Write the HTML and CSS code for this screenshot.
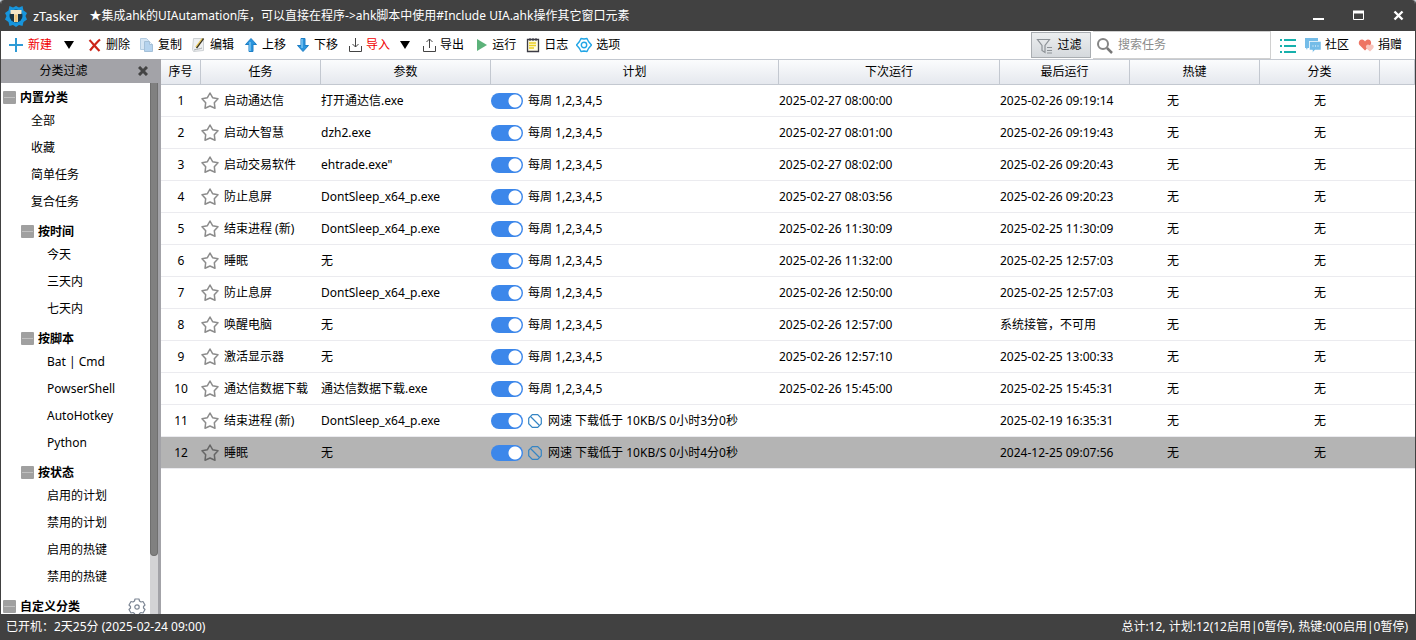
FILE: index.html
```
<!DOCTYPE html>
<html lang="zh-CN">
    <head>
        <meta charset="utf-8">
        <title>zTasker</title>
        <meta name="viewport" content="width=device-width, initial-scale=1">
        <link rel="stylesheet" href="styles.css">
    </head>
    <body>
        <svg class="defs" aria-hidden="true">
            <symbol id="star" viewBox="0 0 18 18">
                <path d="M9 1 L11.6 5.700 L17 6.700 L13.300 10.700 L14 16.300 L9 14 L4 16.300 L4.700 10.700 L1 6.700 L6.400 5.700 Z" fill="none" stroke="currentColor" stroke-width="1.5" stroke-linejoin="round"/>
            </symbol>
            <symbol id="ban" viewBox="0 0 14 14">
                <path d="M4.3 .7h5.4l3.6 3.6v5.4l-3.6 3.6H4.3L.7 9.7V4.3z M3 3l8 8" fill="none" stroke="#3585c4" stroke-width="1.2"/>
            </symbol>
        </svg>
        <div id="window">
            <header id="titlebar">
                <svg class="logo" viewBox="0 0 22 22">
                    <path d="M4.500 1L8 2.500 11 1l3 1.500L17.500 1l1 4.500L22 8l-1.500 3L22 14.500 18.500 17l-1 4-3.500-1-3 2-3-2-3.500 1-1-4L0 14.500 1.500 11 0 8l3.500-2.500z" fill="#1795dc"/>
                    <circle cx="11" cy="11" r="6.500" fill="#1b3443"/>
                    <path d="M5.500 5h11v4H13v8H9V9H5.500z" fill="#f5e6c8"/>
                    <path d="M9.500 9.500h3V17h-3z" fill="#efc478"/>
                </svg>
                <h1>zTasker</h1>
                <p>★集成ahk的UIAutamation库，可以直接在程序-&gt;ahk脚本中使用#Include UIA.ahk操作其它窗口元素</p>
                <div class="winbuttons">
                    <button type="button" aria-label="最小化"><svg viewBox="0 0 12 12"><path d="M0 9h11" stroke="#fff" stroke-width="2"/></svg></button>
                    <button type="button" aria-label="最大化"><svg viewBox="0 0 12 12"><path d="M.5 1v8.5h10V1" fill="none" stroke="#fff"/><path d="M0 2h11" stroke="#fff" stroke-width="3"/></svg></button>
                    <button type="button" aria-label="关闭"><svg viewBox="0 0 12 12"><path d="M1.5 1.5l8 8M9.500 1.5l-8 8" stroke="#fff" stroke-width="2.4"/></svg></button>
                </div>
            </header>

            <nav id="toolbar">
                <button type="button" class="tool red">
                    <svg viewBox="0 0 16 16"><path d="M8 1v14M1 8h14" stroke="#2d9bd6" stroke-width="2"/></svg>新建
                </button>
                <button type="button" class="caret caret-new" aria-label="新建菜单"><svg viewBox="0 0 10 8"><path d="M0 0h10L5 8z"/></svg></button>
                <button type="button" class="tool">
                    <svg viewBox="0 0 16 16"><path d="M3.5 3c3 3 6 7 10 11M14 2.5C10 6 7 10 4 13.5" fill="none" stroke="#cc2418" stroke-width="2.2"/></svg>删除
                </button>
                <button type="button" class="tool">
                    <svg viewBox="0 0 16 16"><path d="M2.5 1.5h6l2 2v9h-8z" fill="#d6e6f4" stroke="#b4cde2"/><path d="M6.5 4.5h5l3 3v7h-8z" fill="#b5d3ee" stroke="#a4c0d8"/><path d="M11.5 4.5v3h3" fill="#eef6fc" stroke="#a4c0d8"/></svg>复制
                </button>
                <button type="button" class="tool">
                    <svg viewBox="0 0 16 16"><path d="M3.5 1.5h10v12l-10 1-1-2z" fill="#eef0f1" stroke="#cdd1d4"/><path d="M4 13c3-1 6-1 8-2" fill="none" stroke="#a7adb2"/><path d="M13.5 1.500l-7 9.500" stroke="#3a3524" stroke-width="1.6"/><path d="M12.300 1.500l-6.500 8.500" stroke="#e8c34a" stroke-width="1.200"/></svg>编辑
                </button>
                <button type="button" class="tool">
                    <svg viewBox="0 0 16 16"><path d="M9 1.5l5.500 6H11v7H7v-7H3.500z" fill="#2a94dc" stroke="#1f7fc6" stroke-linejoin="round"/><path d="M8 5v9" stroke="#7cc6f3" stroke-width="1.5"/></svg>上移
                </button>
                <button type="button" class="tool">
                    <svg viewBox="0 0 16 16"><path d="M9 14.5l5.500-6H11v-7H7v7H3.500z" fill="#2a94dc" stroke="#1f7fc6" stroke-linejoin="round"/><path d="M8 2v9" stroke="#7cc6f3" stroke-width="1.5"/></svg>下移
                </button>
                <button type="button" class="tool red">
                    <svg viewBox="0 0 16 16"><path d="M3.5 9v5.500h12V9M9.5 1v9M6.500 7l3 3 3-3" fill="none" stroke="#444"/></svg>导入
                </button>
                <button type="button" class="caret" aria-label="导入菜单"><svg viewBox="0 0 10 8"><path d="M0 0h10L5 8z"/></svg></button>
                <button type="button" class="tool">
                    <svg viewBox="0 0 16 16"><path d="M3.5 9v5.500h12V9M9.5 11V2M6.500 5l3-3 3 3" fill="none" stroke="#444"/></svg>导出
                </button>
                <button type="button" class="tool">
                    <svg viewBox="0 0 16 16"><path d="M5 2l10 6-10 6z" fill="#5cb27a"/></svg>运行
                </button>
                <button type="button" class="tool">
                    <svg viewBox="0 0 16 16"><path d="M3.5 2.5h11v12h-11z" fill="#fffbe4" stroke="#3c3c46" stroke-width="1.3"/><path d="M6 1v3M9 1v3M12 1v3" stroke="#3c3c46"/><path d="M5 6h7M5 8.500h7M5 11h5" stroke="#ecd022" stroke-width="1.4"/></svg>日志
                </button>
                <button type="button" class="tool">
                    <svg viewBox="0 0 16 16"><path d="M5 1.5L8 2l3-.5 1.500 3 3 3.500-3 3.500-1.500 3L8 14l-3 .5-1.500-3L.5 8l3-3.500z" fill="none" stroke="#21a5e6" stroke-width="1.4" stroke-linejoin="round"/><circle cx="8" cy="8" r="2.700" fill="none" stroke="#21a5e6" stroke-width="1.4"/></svg>选项
                </button>

                <div class="right">
                    <button type="button" class="filter">
                        <svg viewBox="0 0 18 18"><path d="M1.5 3.500h12l-4.500 6v7l-3-2v-5z" fill="none" stroke="#8d9297" stroke-width="1.200"/><path d="M11 11.500h5M11 14.500h5M11 17h5" stroke="#8d9297"/></svg>过滤
                    </button>
                    <label class="search">
                        <svg viewBox="0 0 18 18"><circle cx="7" cy="8" r="5" fill="none" stroke="#858585" stroke-width="2"/><path d="M11 12l5 5" stroke="#777" stroke-width="2.5"/></svg>
                        <input type="text" placeholder="搜索任务" aria-label="搜索任务">
                    </label>
                    <button type="button" class="tool listview" aria-label="列表">
                        <svg viewBox="0 0 16 16"><path d="M0 3h2M4 3h12M0 9h2M4 9h12M0 15h2M4 15h12" stroke="#16b0ac" stroke-width="2"/></svg>
                    </button>
                    <a href="#" class="tool">
                        <svg viewBox="0 0 16 16"><path d="M0 1h13v3H4v7H2.500L2 13l-1-2H0z" fill="#74bce8"/><path d="M4.500 4.500H16V13h-6l-2.500 2.500V13h-3z" fill="#74bce8" stroke="#fff" stroke-width=".5"/><path d="M7.500 9h1M10 9h1M12.500 9h1" stroke="#fff"/></svg>社区
                    </a>
                    <a href="#" class="tool">
                        <svg viewBox="0 0 16 16"><path d="M7 13.500L1.500 8C0 6 1 2.500 4 2.500c1.500 0 2.500 1 3 2 .5-1 1.500-2 3-2 3 0 4 3.500 2.500 5.500z" fill="#ee7463"/><path d="M12 14.500L8.500 11.500c-1.500-2 0-4 1.500-4 1 0 1.500 1 1.500 1s.5-1 2-1c2 0 3 2 1.500 4z" fill="#f8c5bd"/></svg>捐赠
                    </a>
                </div>
            </nav>

            <main>
                <aside id="sidebar">
                    <div class="sidehead">
                        <h2>分类过滤</h2>
                        <button type="button" aria-label="关闭"><svg viewBox="0 0 10 10"><path d="M1 1l8 8M9 1L1 9" stroke="#444" stroke-width="3"/></svg></button>
                    </div>
                    <div class="sidebody">
                        <div class="tree">
                            <h3><i></i>内置分类</h3>
                            <ul>
                                <li>全部</li>
                                <li>收藏</li>
                                <li>简单任务</li>
                                <li>复合任务</li>
                            </ul>
                            <div class="sub">
                                <h3><i></i>按时间</h3>
                                <ul>
                                    <li>今天</li>
                                    <li>三天内</li>
                                    <li>七天内</li>
                                </ul>
                                <h3><i></i>按脚本</h3>
                                <ul>
                                    <li>Bat | Cmd</li>
                                    <li>PowserShell</li>
                                    <li>AutoHotkey</li>
                                    <li>Python</li>
                                </ul>
                                <h3><i></i>按状态</h3>
                                <ul>
                                    <li>启用的计划</li>
                                    <li>禁用的计划</li>
                                    <li>启用的热键</li>
                                    <li>禁用的热键</li>
                                </ul>
                            </div>
                            <h3><i></i>自定义分类
                                <button type="button" class="gear" aria-label="设置"><svg viewBox="0 0 18 18"><path d="M7 1h4l.5 2 1.500 1 2-.5 2 3.500-1.500 1.500v1.500L17 11.500 15 15l-2-.5-1.500 1L11 17H7l-.5-1.500-1.500-1-2 .5-2-3.500L2.500 10V8.500L1 7l2-3.500L5 4l1.500-1z" fill="none" stroke="#7d8694" stroke-width="1.200" stroke-linejoin="round"/><circle cx="9" cy="9" r="2.200" fill="none" stroke="#7d8694" stroke-width="1.200"/></svg></button>
                            </h3>
                        </div>
                        <div class="track"><div class="thumb"></div></div>
                    </div>
                </aside>

                <div id="list">
                    <table>
                        <thead>
                            <tr>
                                <th class="c-no">序号</th>
                                <th class="c-task">任务</th>
                                <th class="c-arg">参数</th>
                                <th>计划</th>
                                <th class="c-next">下次运行</th>
                                <th class="c-last">最后运行</th>
                                <th class="c-key">热键</th>
                                <th class="c-cat">分类</th>
                                <th class="c-end"></th>
                            </tr>
                        </thead>
                        <tbody id="tasks"></tbody>
                    </table>
                </div>
            </main>

            <footer id="status">
                <span>已开机：2天25分 (2025-02-24 09:00)</span>
                <span>总计:12, 计划:12(12启用|0暂停), 热键:0(0启用|0暂停)</span>
            </footer>
        </div>
        <script src="script.js"></script>
    </body>
</html>
```
FILE: styles.css
```
*{
    box-sizing: border-box;
}
body{
    margin: 0;
    background-color: #c9d3da;
    color: #000;
    font: 12px/16px "Noto Sans", "Noto Sans CJK SC", sans-serif;
}
h1, h2, h3, p, ul{
    margin: 0;
    padding: 0;
    font-size: 12px;
    font-weight: normal;
}
button, input{
    font: inherit;
    color: inherit;
    border: 0;
    padding: 0;
    background: none;
}
a{
    color: inherit;
    text-decoration: none;
}
svg{
    display: block;
    flex: none;
}
.defs{
    display: none;
}
#window{
    display: flex;
    flex-direction: column;
    height: 100vh;
    background-color: #fff;
    border: solid #414141;
    border-width: 0 1px;
    border-radius: 4px 4px 0 0;
    overflow: hidden;
}

/* title bar */
#titlebar{
    display: flex;
    align-items: center;
    height: 31px;
    flex: none;
    padding: 1px 10px 0 4px;
    background-color: #414141;
    color: #fff;
}
.logo{
    width: 22px;
    height: 22px;
    margin-right: 6px;
}
#titlebar h1{
    font-size: 13px;
    margin-right: 11px;
}
#titlebar p{
    white-space: nowrap;
}
.winbuttons{
    display: flex;
    gap: 28px;
    margin-left: auto;
}
.winbuttons svg{
    width: 12px;
    height: 12px;
}

/* toolbar */
#toolbar{
    display: flex;
    align-items: center;
    gap: 8px;
    height: 28px;
    flex: none;
    padding: 0 13px 0 7px;
    white-space: nowrap;
}
.tool{
    display: flex;
    align-items: center;
    gap: 4px;
}
.tool svg{
    width: 16px;
    height: 16px;
}
.red{
    color: #f00000;
}
.caret{
    display: flex;
    justify-content: center;
    width: 14px;
}
.caret-new{
    width: 18px;
}
.caret svg{
    width: 10px;
    height: 8px;
}
.right{
    display: flex;
    align-items: center;
    gap: 9px;
    margin-left: auto;
}
.filter{
    display: flex;
    align-items: center;
    justify-content: center;
    gap: 3px;
    width: 60px;
    height: 26px;
    padding-right: 4px;
    background: linear-gradient(#eceeef, #d5d9dd);
    border: 1px solid #a9adb1;
}
.filter svg{
    width: 18px;
    height: 18px;
}
.search{
    display: flex;
    align-items: center;
    gap: 4px;
    width: 178px;
    height: 28px;
    margin-left: -7px;
    padding-left: 3px;
    border: 1px solid #d0d0d0;
    border-left: 0;
}
.search svg{
    width: 18px;
    height: 18px;
}
.search input{
    flex: 1;
    min-width: 0;
    outline: none;
}
.search input::placeholder{
    color: #8c8c8c;
}

/* sidebar */
main{
    display: flex;
    flex: 1;
    min-height: 0;
}
#sidebar{
    display: flex;
    flex-direction: column;
    width: 160px;
    flex: none;
    border-right: 3px solid #a3a3a8;
}
.sidehead{
    display: flex;
    align-items: center;
    height: 24px;
    flex: none;
    padding-right: 10px;
    background-color: #a3a3a8;
}
.sidehead h2{
    flex: 1;
    padding-right: 12px;
    text-align: center;
}
.sidehead svg{
    width: 10px;
    height: 10px;
}
.sidebody{
    display: flex;
    flex: 1;
    min-height: 0;
}
.tree{
    flex: 1;
    overflow: hidden;
}
.tree h3{
    display: flex;
    align-items: center;
    gap: 4px;
    height: 19px;
    margin: 7px 4px 0 2px;
    font-weight: bold;
}
.tree > h3:first-child{
    margin-top: 5px;
}
.tree i{
    width: 13px;
    height: 13px;
    border: solid #a0a0a0;
    border-width: 6px 1px;
    background-color: #c0c0c0;
    border-radius: 1px;
}
.tree ul{
    list-style: none;
    padding-left: 30px;
}
.tree li{
    height: 27px;
    line-height: 27px;
}
.sub{
    padding-left: 18px;
}
.sub ul{
    padding-left: 28px;
}
.gear{
    margin-left: auto;
}
.gear svg{
    width: 18px;
    height: 18px;
}
.track{
    width: 8px;
    background-color: #d3d3d5;
}
.thumb{
    height: 89%;
    background-color: #808080;
    border: solid #6f6f6f;
    border-width: 0 1px 1px;
    border-radius: 0 0 4px 4px;
}

/* task list */
#list{
    flex: 1;
    min-width: 0;
    overflow: hidden;
}
table{
    width: 100%;
    table-layout: fixed;
    border-collapse: separate;
    border-spacing: 0;
}
th{
    height: 26px;
    padding: 0;
    font-weight: normal;
    background: linear-gradient(#fbfcfd, #e5e8ee);
    border: solid #c3c8d0;
    border-width: 1px 1px 1px 0;
}
td{
    height: 32px;
    padding: 0;
    border-bottom: 1px solid #ebebef;
    white-space: nowrap;
}
.c-no{
    width: 40px;
    text-align: center;
}
.c-task{
    width: 120px;
}
.c-arg{
    width: 170px;
}
.c-next{
    width: 221px;
}
.c-last{
    width: 130px;
}
.c-key{
    width: 130px;
}
.c-cat{
    width: 120px;
    text-align: center;
}
.c-end{
    width: 35px;
}
td.c-key{
    text-align: center;
    padding-right: 44px;
}
.selected td{
    background-color: #b4b4b4;
}
.cell{
    display: flex;
    align-items: center;
    gap: 5px;
}
.star{
    color: #8c8c8c;
}
.star svg{
    width: 18px;
    height: 18px;
}
.selected .star{
    color: #666;
}
.ban{
    width: 14px;
    height: 14px;
    margin-right: 1px;
}
.switch{
    appearance: none;
    width: 32px;
    height: 16px;
    margin: 0;
    border-radius: 8px;
    background: radial-gradient(circle at 24px 8px, #fff 6px, #3c87ea 7px);
}

/* status bar */
#status{
    display: flex;
    justify-content: space-between;
    align-items: center;
    height: 26px;
    flex: none;
    padding: 0 7px 0 5px;
    background-color: #414141;
    color: #fff;
}
```
FILE: script.js
```
var week = "每周 1,2,3,4,5";
var tasks = [
    ["启动通达信", "打开通达信.exe", week, "2025-02-27 08:00:00", "2025-02-26 09:19:14"],
    ["启动大智慧", "dzh2.exe", week, "2025-02-27 08:01:00", "2025-02-26 09:19:43"],
    ["启动交易软件", "ehtrade.exe\"", week, "2025-02-27 08:02:00", "2025-02-26 09:20:43"],
    ["防止息屏", "DontSleep_x64_p.exe", week, "2025-02-27 08:03:56", "2025-02-26 09:20:23"],
    ["结束进程 (新)", "DontSleep_x64_p.exe", week, "2025-02-26 11:30:09", "2025-02-25 11:30:09"],
    ["睡眠", "无", week, "2025-02-26 11:32:00", "2025-02-25 12:57:03"],
    ["防止息屏", "DontSleep_x64_p.exe", week, "2025-02-26 12:50:00", "2025-02-25 12:57:03"],
    ["唤醒电脑", "无", week, "2025-02-26 12:57:00", "系统接管，不可用"],
    ["激活显示器", "无", week, "2025-02-26 12:57:10", "2025-02-25 13:00:33"],
    ["通达信数据下载", "通达信数据下载.exe", week, "2025-02-26 15:45:00", "2025-02-25 15:45:31"],
    ["结束进程 (新)", "DontSleep_x64_p.exe", "网速 下载低于 10KB/S 0小时3分0秒", "", "2025-02-19 16:35:31"],
    ["睡眠", "无", "网速 下载低于 10KB/S 0小时4分0秒", "", "2024-12-25 09:07:56"]
];

let html = "";
for (var i = 0; i < tasks.length; i++){
    const t = tasks[i];
    // no next run means the plan waits on a condition
    const ban = t[3] ? "" : `<svg class="ban"><use href="#ban"/></svg>`;
    html += `<tr${i == tasks.length - 1 ? ' class="selected"' : ""}>
        <td class="c-no">${i + 1}</td>
        <td><div class="cell"><button type="button" class="star" aria-label="收藏"><svg><use href="#star"/></svg></button>${t[0]}</div></td>
        <td>${t[1]}</td>
        <td><div class="cell"><input type="checkbox" class="switch" aria-label="启用" checked>${ban}${t[2]}</div></td>
        <td>${t[3]}</td>
        <td>${t[4]}</td>
        <td class="c-key">无</td>
        <td class="c-cat">无</td>
        <td></td>
    </tr>`;
}
document.getElementById("tasks").innerHTML = html;
```
